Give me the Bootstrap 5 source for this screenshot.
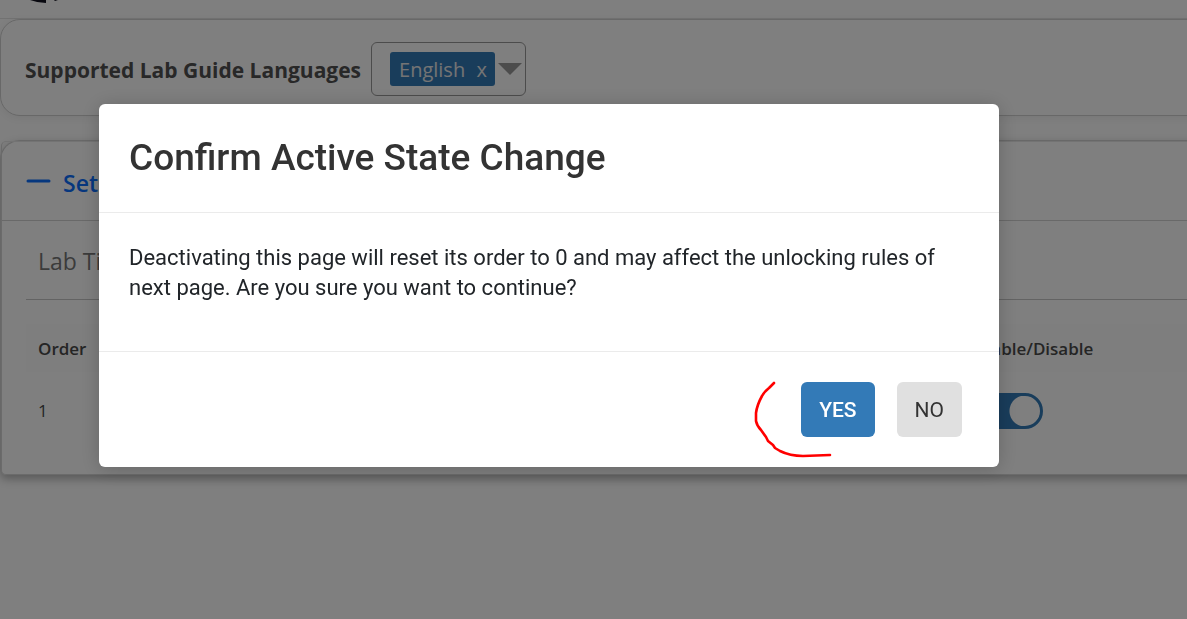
<!DOCTYPE html>
<html lang="en">
<head>
<meta charset="utf-8">
<meta name="viewport" content="width=device-width, initial-scale=1">
<title>Lab Guide Settings</title>
<link rel="stylesheet" href="https://cdn.jsdelivr.net/npm/bootstrap@5.3.0/dist/css/bootstrap.min.css">
<style>
  body { font-family: "Open Sans", "Noto Sans", sans-serif; background: #fefefe; overflow-x: hidden; min-height: 100vh; color: #444; }
  .top-strip { height: 19px; overflow: hidden; padding-left: 30px; border-bottom: 1px solid #e4e4e4; }
  .top-strip svg { display: block; }
  .panel { border: 1px solid #d0d0d0; margin-right: -30px; background: #fff; }
  .lang-panel { border-radius: 20px; height: 97px; padding: 3px 24px 0; gap: 10px; box-shadow: 0 2px 8px rgba(0,0,0,.06); }
  .lang-label { font-size: 21px; line-height: 24px; padding-top: 2px; font-weight: 700; color: #505050; }
  .lang-box { width: 155px; height: 54px; border: 1px solid #999; border-radius: 6px; padding: 0 3px 0 18px; gap: 3px; background: #fff; }
  .lang-chip { background: #337ab7; color: #e8e8e8; font-size: 20px; line-height: 30px; height: 34px; width: 105px; border: 0; border-radius: 3px; padding: 3px 8px 1px 9px; }
  .settings-panel { border-radius: 20px 0 0 6px; margin-top: 24px; border-bottom: 0; box-shadow: 0 4px 10px rgba(0,0,0,.3); }
  .settings-inner { border: 1px solid #d6d6d6; border-top-color: #e6e6e6; border-radius: 5px; }
  .settings-head { height: 79px; padding: 0 24px; gap: 12px; border-bottom: 1px solid #d2d2d2; }
  .settings-head a { color: #0d6efd; font-size: 23px; font-weight: 600; padding-top: 4px; }
  .settings-body { padding: 0 24px 24px; }
  .lab-line { height: 79px; padding: 2px 12px 0; border-bottom: 1px solid #c6c6c6; font-size: 23px; color: #777; }
  .pages-table { margin: 24px 0 0; color: #4a4a4a; table-layout: fixed; }
  .pages-table th { background: #fcfcfc; height: 48px; padding: 2px 12px 0; font-size: 17px; font-weight: 600; border: 0; vertical-align: middle; }
  .pages-table td { height: 78px; padding: 0 12px; font-size: 17px; border: 0; vertical-align: middle; }
  .col-order { width: 933px; }
  .form-check-input.toggle { width: 72px; height: 36px; margin: 0; border: 3px solid #337ab7; background-size: 38px; }
  .form-check-input.toggle:checked { background-color: #337ab7; background-image: radial-gradient(circle, #fff 15px, transparent 16px); background-position: right -4px center; border-color: #337ab7; }
  .modal-backdrop.show { opacity: .5; }
  .confirm { font-family: Roboto, sans-serif; }
  .confirm .modal-dialog { max-width: 900px; margin: 104px 99px 0; }
  .confirm .modal-content { border: 0; border-radius: 6px; box-shadow: 0 2px 20px rgba(0,0,0,.2); }
  .confirm .modal-header { padding: 30px; height: 109px; border-bottom: 1px solid #ebebeb; }
  .confirm .modal-title { font-size: 37px; line-height: 48px; font-weight: 500; color: #333; }
  .confirm .modal-body { padding: 30px 30px 48px; font-size: 22px; line-height: 30px; color: #212529; }
  .confirm .modal-footer { padding: 30px 37px; gap: 22px; border-top: 1px solid #ebebeb; }
  .confirm .btn { height: 55px; margin: 0; padding: 2px 18px 0; font-size: 21px; border: 0; border-radius: 6px; }
  .btn-yes, .btn-yes:hover { background: #337ab7; color: #fff; font-weight: 500; }
  .btn-no, .btn-no:hover { background: #e0e0e0; color: #333; font-weight: 400; }
  .pen-mark { position: absolute; right: 166px; bottom: 7px; pointer-events: none; }
</style>
</head>
<body>
  <header class="top-strip">
    <svg width="32" height="8" viewBox="0 0 32 8" aria-hidden="true"><path d="M0 0H16V3Q8 3 0 0ZM24 0H28L25 1Z" fill="#10101e"/></svg>
  </header>
  <main>
    <section class="panel lang-panel d-flex align-items-center">
      <span class="lang-label text-nowrap">Supported Lab Guide Languages</span>
      <div class="lang-box d-flex align-items-center">
        <button type="button" class="lang-chip d-flex justify-content-between flex-shrink-0"><span>English</span><span>x</span></button>
        <svg width="24" height="12" viewBox="0 0 24 12" aria-hidden="true"><path d="M0 0H24L12 12Z" fill="#999"/></svg>
      </div>
    </section>
    <section class="panel settings-panel">
      <div class="settings-inner">
        <div class="settings-head d-flex align-items-center">
          <svg width="25" height="4" viewBox="0 0 25 4" aria-hidden="true"><path d="M2 2H23" stroke="#0d6efd" stroke-width="3" stroke-linecap="round"/></svg>
          <a href="#" class="text-decoration-none">Set</a>
        </div>
        <div class="settings-body">
          <div class="lab-line d-flex align-items-center">Lab Ti</div>
          <table class="table pages-table">
            <colgroup><col class="col-order"><col></colgroup>
            <thead><tr><th scope="col">Order</th><th scope="col">Enable/Disable</th></tr></thead>
            <tbody><tr><td>1</td><td><div class="form-switch p-0 d-flex"><input class="form-check-input toggle" type="checkbox" role="switch" aria-label="Enable page 1" checked></div></td></tr></tbody>
          </table>
        </div>
      </div>
    </section>
  </main>

  <div class="modal-backdrop show"></div>
  <div class="modal confirm show d-block" role="dialog" aria-modal="true" aria-labelledby="confirmTitle">
    <div class="modal-dialog">
      <div class="modal-content">
        <div class="modal-header"><h1 class="modal-title" id="confirmTitle">Confirm Active State Change</h1></div>
        <div class="modal-body">Deactivating this page will reset its order to 0 and may affect the unlocking rules of<br>next page. Are you sure you want to continue?</div>
        <div class="modal-footer">
          <button type="button" class="btn btn-yes">YES</button>
          <button type="button" class="btn btn-no">NO</button>
        </div>
        <svg class="pen-mark" width="80" height="80" viewBox="0 0 80 80" fill="none" stroke="#f00" stroke-width="2.6" stroke-linecap="round" stroke-linejoin="round" aria-hidden="true"><path d="M21 3L16 8Q11 12 9 16Q4 25 3 33V41Q4 46 8 50L13 57L15 61L20 65L22 68L27 71Q37 76 50 76L77 75"/></svg>
      </div>
    </div>
  </div>
<script src="https://cdn.jsdelivr.net/npm/bootstrap@5.3.0/dist/js/bootstrap.bundle.min.js"></script>
</body>
</html>
